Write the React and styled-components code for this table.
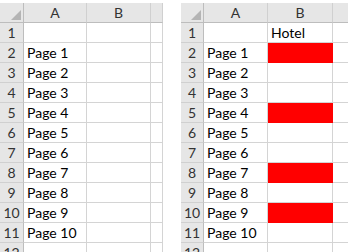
import React from "react";
import styled, { createGlobalStyle } from "styled-components";

const Global = createGlobalStyle`
  html, body { margin: 0; padding: 0; background: #fff; }
  body { font-family: Lato, "Open Sans", sans-serif; }
`;

const Page = styled.div`
  display: flex;
  align-items: flex-start;
  gap: ${(p) => p.$gap}px;
  padding-top: 3px;
  width: 348px;
  height: 252px;
  overflow: hidden;
`;

const Sheet = styled.div`
  display: grid;
  grid-template-columns: ${(p) => p.$cols};
  grid-auto-rows: 20px;
  flex: none;
`;

const Corner = styled.div`
  position: relative;
  background: #e6e6e6;
  border-right: 1px solid #bdbdbd;
  border-bottom: 1px solid #bdbdbd;
  box-sizing: border-box;
  height: 20px;
`;

const CornerMark = styled.svg`
  position: absolute;
  right: 2px;
  bottom: 2px;
`;

const ColHead = styled.div`
  box-sizing: border-box;
  background: #e6e6e6;
  border-right: 1px solid #d0d0d0;
  border-bottom: 1px solid #bdbdbd;
  color: #333;
  font-size: 14px;
  line-height: 19px;
  text-align: center;
`;

const RowHead = styled.div`
  box-sizing: border-box;
  background: #e6e6e6;
  border-right: 1px solid #bdbdbd;
  border-bottom: 1px solid #d0d0d0;
  color: #333;
  font-size: 14px;
  line-height: 19px;
  text-align: center;
`;

const Cell = styled.div`
  box-sizing: border-box;
  background: ${(p) => (p.$fill ? "#ff0000" : "#fff")};
  border-right: 1px solid ${(p) => (p.$fill ? "#ff0000" : "#d4d4d4")};
  border-bottom: 1px solid ${(p) => (p.$fill ? "#ff0000" : "#d4d4d4")};
  color: #000;
  font-size: 14px;
  line-height: 19px;
  padding-left: 3px;
  white-space: nowrap;
  overflow: hidden;
`;

const pages = Array.from({ length: 10 }, (_, i) => `Page ${i + 1}`);

function Grid({ cols, heading, filled }) {
  const rows = [];
  for (let r = 1; r <= 12; r++) {
    const a = r >= 2 && r <= 11 ? pages[r - 2] : "";
    const b = r === 1 ? heading : "";
    rows.push(
      <React.Fragment key={r}>
        <RowHead>{r}</RowHead>
        <Cell>{a}</Cell>
        <Cell $fill={filled.includes(r)}>{b}</Cell>
        <Cell />
      </React.Fragment>
    );
  }
  return (
    <Sheet $cols={cols}>
      <Corner>
        <CornerMark width="10" height="10" viewBox="0 0 10 10">
          <polygon points="10,0 10,10 0,10" fill="#b4b4b4" />
        </CornerMark>
      </Corner>
      <ColHead>A</ColHead>
      <ColHead>B</ColHead>
      <ColHead />
      {rows}
    </Sheet>
  );
}

export default function App() {
  return (
    <>
      <Global />
      <Page $gap={18}>
        <Grid cols="24px 63px 64px 12px" heading="" filled={[]} />
        <Grid cols="23px 64px 65px 20px" heading="Hotel" filled={[2, 5, 8, 10]} />
      </Page>
    </>
  );
}
